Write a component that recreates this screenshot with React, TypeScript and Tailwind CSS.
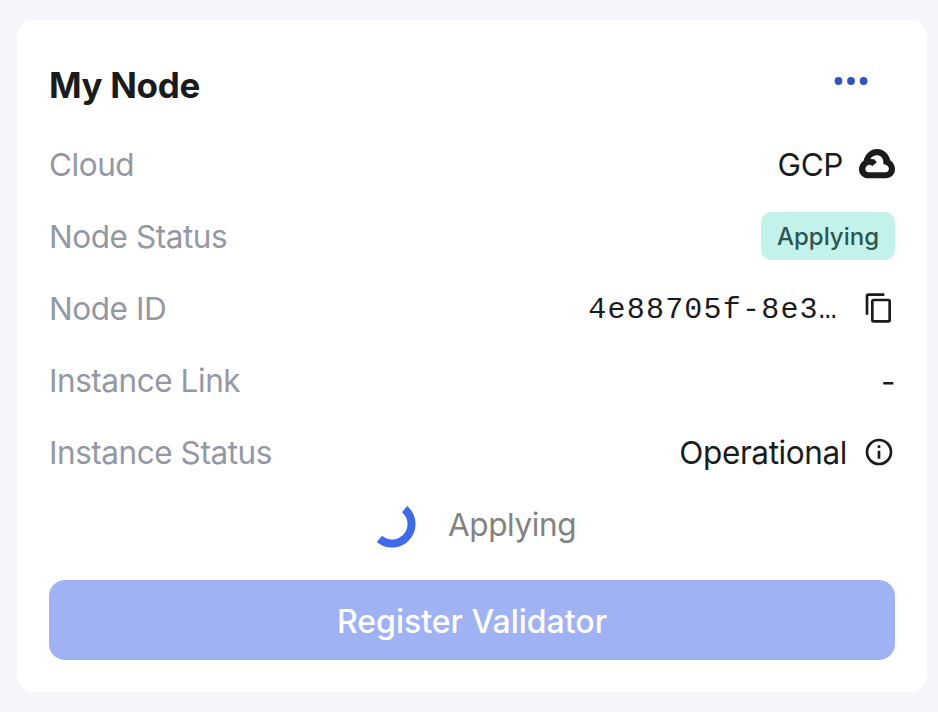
import React from "react";

function Row({ label, children }: { label: string; children: React.ReactNode }) {
  return (
    <div className="flex h-[72px] items-center justify-between">
      <span className="pt-0.5 text-[31.5px] leading-[48px] tracking-[-0.45px] text-[#9398a4]">{label}</span>
      <div className="flex items-center text-[31.5px] leading-[48px] tracking-[-0.4px] text-[#1a1b1d]">{children}</div>
    </div>
  );
}

export default function App() {
  return (
    <div className="h-[712px] w-[938px] bg-[#f5f6fa] pl-[17px] pt-5 font-['Inter',sans-serif]">
      <main className="flex h-[672px] w-[910px] flex-col rounded-2xl bg-white px-8 pt-8">
        <header className="flex h-[76px] items-start justify-between">
          <h1 className="pt-[9px] text-[35px] font-bold leading-[48px] tracking-[-0.35px] text-[#1a1b1d]">My Node</h1>
          <svg className="mr-[26px] mt-[24px]" width="36" height="10" fill="#2f55ba">
            <circle cx="5.5" cy="5" r="3.9" /><circle cx="18" cy="5" r="3.9" /><circle cx="30.6" cy="5" r="3.9" />
          </svg>
        </header>
        <Row label="Cloud">
          <span className="pt-0.5">GCP</span>
          <svg className="ml-4" width="36" height="30" viewBox="0 0 36 30">
            <path fill="#1a1b1d" d="M9.5 29.3C4 29.3 0 25.5 0 20.2C0 16.5 2 13.5 4.5 11.8C6.5 5 11.5 .1 18 .1C24.5 .1 29.5 4.8 31.4 11.5C34.2 13.2 36 16.6 36 20.3C36 25.4 32 29.3 26.5 29.3Z" />
            <path fill="#fff" d="M9.5 23.2C5.6 23 5.4 18 8.8 16.2C10.5 15.5 11.8 16 13.4 16.9L17.8 13.2L15.3 10.3L11.3 10C13 7.3 15.5 6.2 18.3 6.3C22.5 6.6 24.7 9.8 24.5 15.2C27.8 15.6 29.9 17.2 29.9 19.5C29.9 21.8 28.5 23.2 26.5 23.2Z" />
          </svg>
        </Row>
        <Row label="Node Status">
          <span className="flex h-12 w-[134px] items-center justify-center rounded-[10px] bg-[#c2f2ea] pt-0.5 text-2xl font-medium tracking-normal text-[#2d5552]">Applying</span>
        </Row>
        <Row label="Node ID">
          <span className="pt-1 font-['Liberation_Mono',monospace] text-[30px] tracking-[1.2px]">4e88705f-8e3…</span>
          <svg className="ml-[25px]" width="32" height="32" viewBox="0 0 24 24" fill="none" stroke="#1a1b1d" strokeWidth="2">
            <rect x="7" y="6" width="13" height="16" rx="1" />
            <path d="M3 17V3a1 1 0 0 1 1-1h12" />
          </svg>
        </Row>
        <Row label="Instance Link"><span className="pt-1">-</span></Row>
        <Row label="Instance Status">
          <span className="pt-0.5">Operational</span>
          <svg className="ml-4" width="32" height="32" viewBox="0 0 24 24" fill="#1a1b1d"><path d="M11 7h2v2h-2zm0 4h2v6h-2zm1-9a10 10 0 1 0 0 20 10 10 0 0 0 0-20zm0 18a8 8 0 1 1 0-16 8 8 0 0 1 0 16z" /></svg>
        </Row>
        <div className="flex h-[72px] items-center justify-center gap-8">
          <svg width="48" height="48" fill="none" stroke="#3e6bea" strokeWidth="8"><path d="M36.6 9.1A19.5 19.5 0 0 1 11.4 38.9" /></svg>
          <span className="pt-0.5 text-[31.5px] tracking-[-0.4px] text-[#828282]">Applying</span>
        </div>
        <button className="mt-5 h-20 rounded-2xl bg-[#9fb3f4] pt-[3px] text-[32px] font-medium text-white">Register Validator</button>
      </main>
    </div>
  );
}
